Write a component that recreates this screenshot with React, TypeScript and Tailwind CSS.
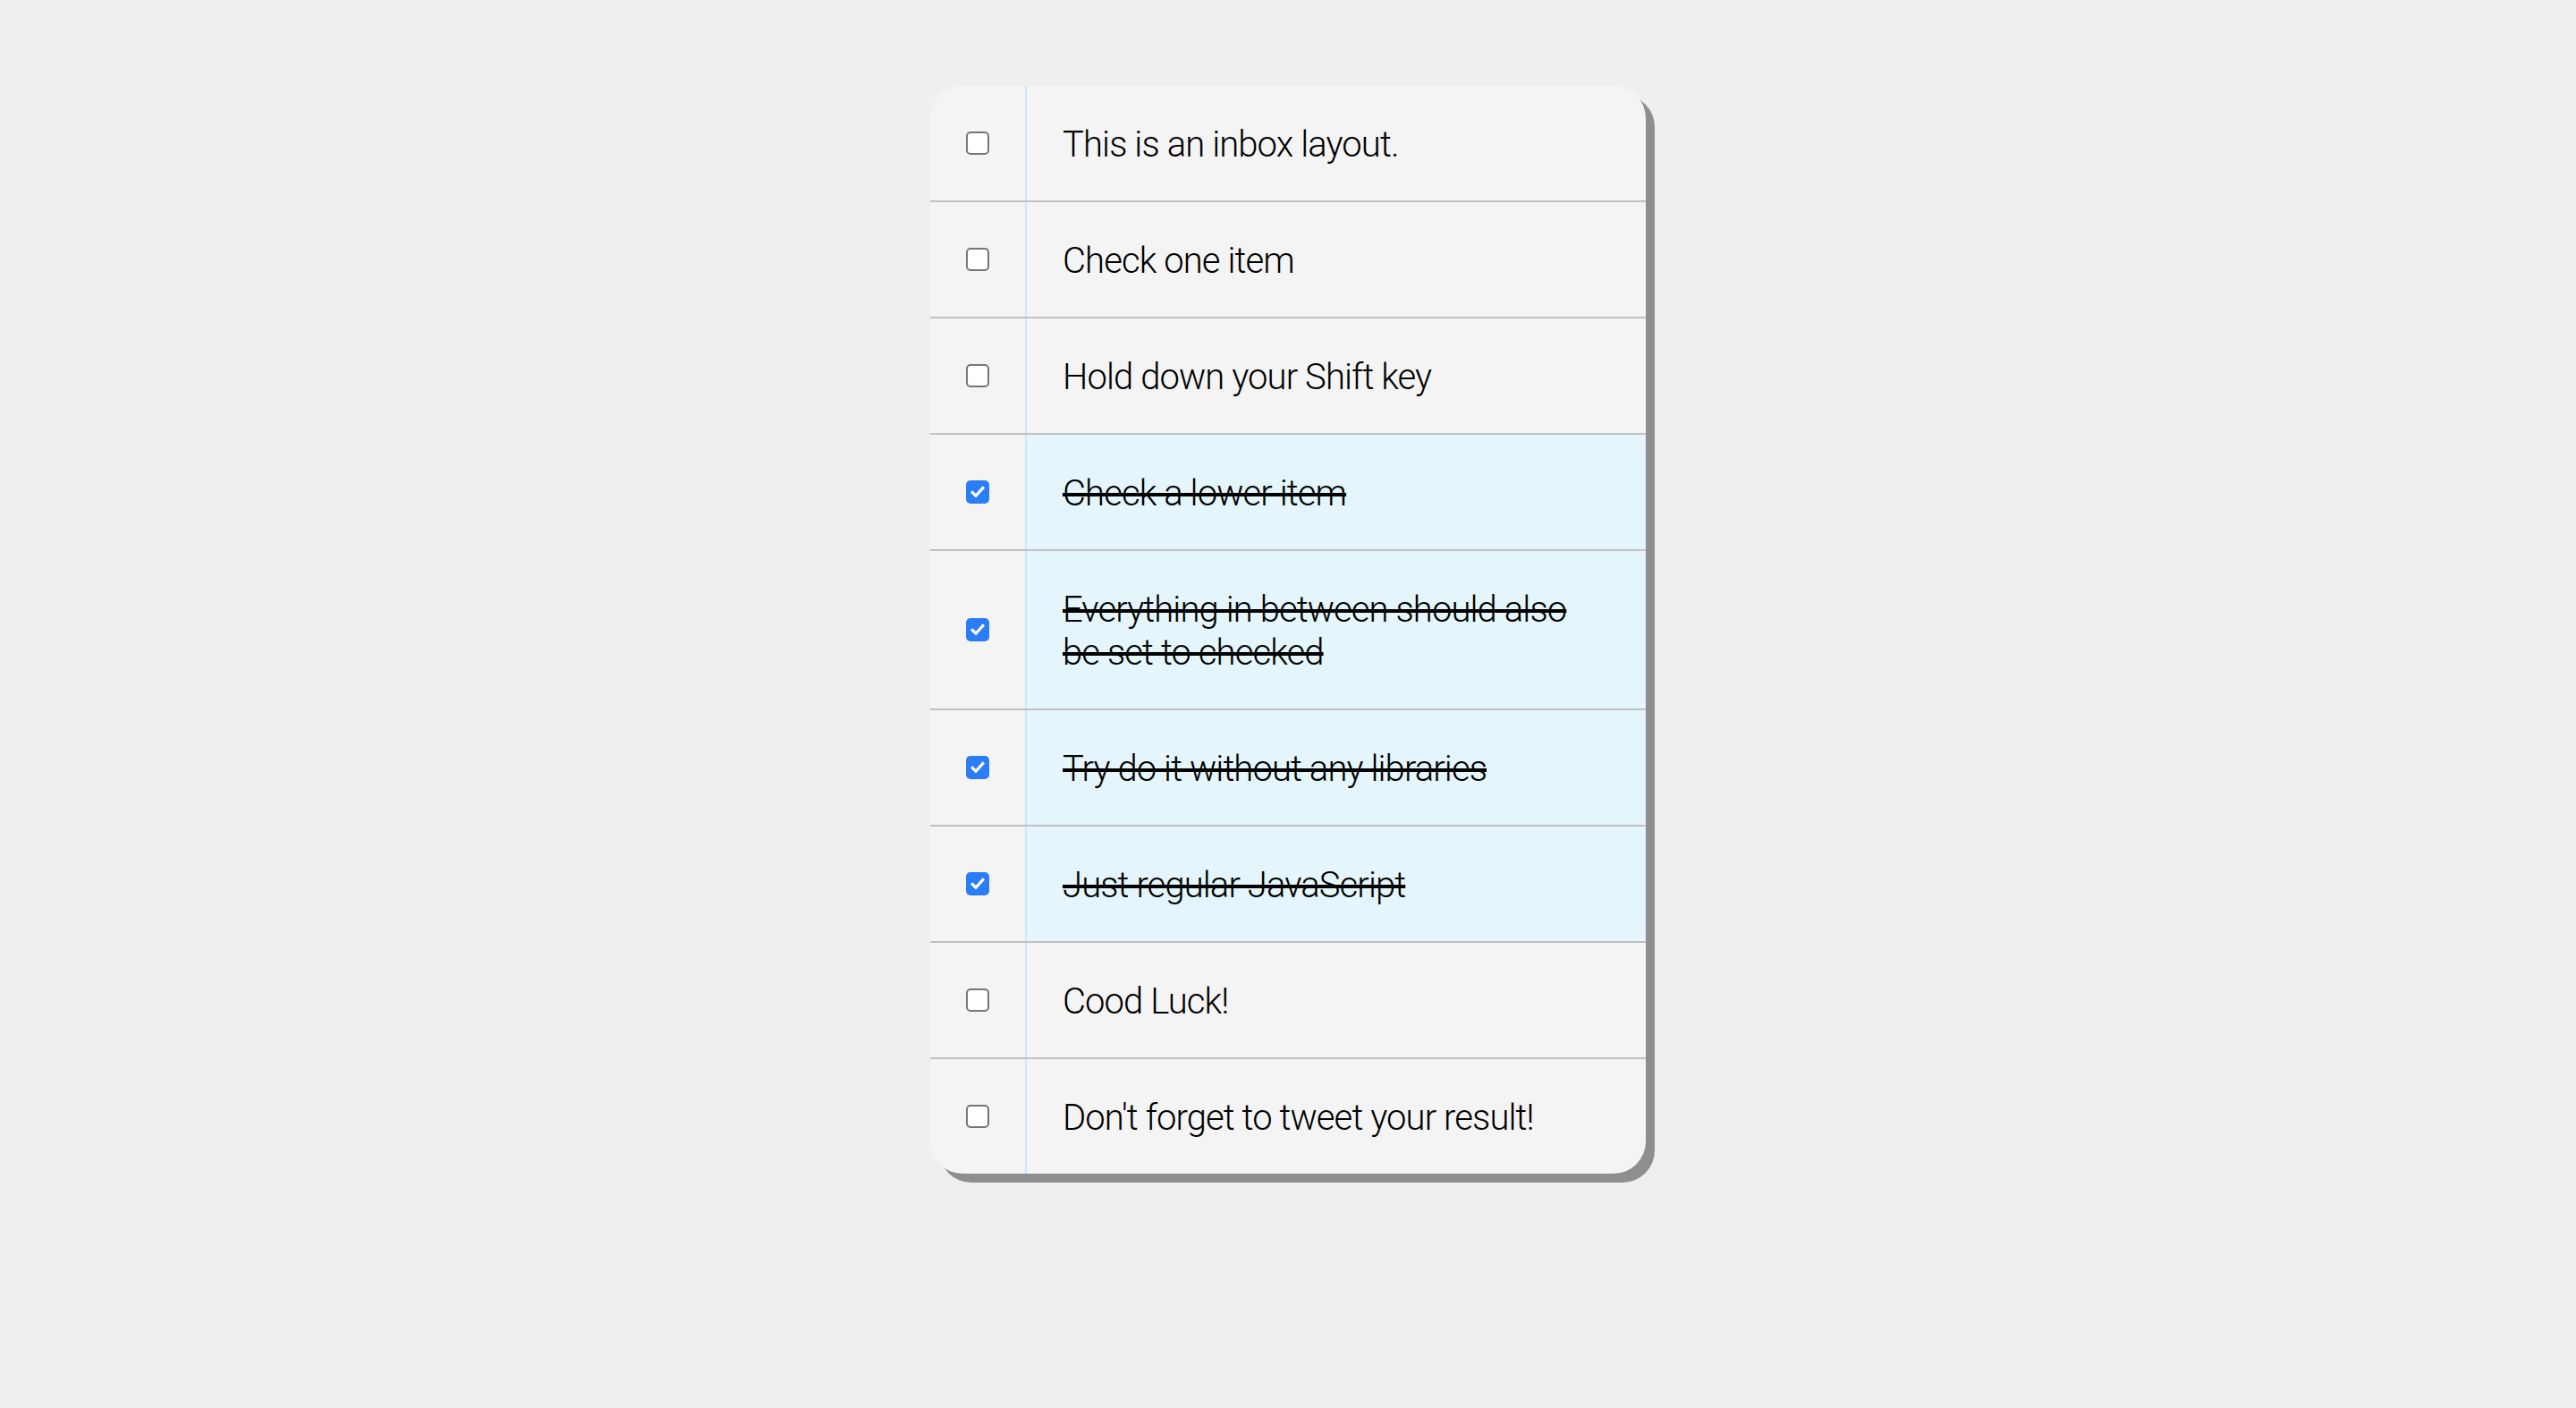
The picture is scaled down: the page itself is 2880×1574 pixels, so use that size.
import React from "react";

const items: { text: string; checked: boolean }[] = [
  { text: "This is an inbox layout.", checked: false },
  { text: "Check one item", checked: false },
  { text: "Hold down your Shift key", checked: false },
  { text: "Check a lower item", checked: true },
  { text: "Everything in between should also be set to checked", checked: true },
  { text: "Try do it without any libraries", checked: true },
  { text: "Just regular JavaScript", checked: true },
  { text: "Cood Luck!", checked: false },
  { text: "Don't forget to tweet your result!", checked: false },
];

function Box({ checked }: { checked: boolean }) {
  if (checked) {
    return (
      <div className="w-[26px] h-[26px] rounded-[5px] bg-[#2b7df7] flex items-center justify-center">
        <svg width="18" height="18" viewBox="0 0 18 18" fill="none">
          <path d="M3.2 9.4 L7 13.2 L14.8 4.6" stroke="white" strokeWidth="3.2" strokeLinecap="square" />
        </svg>
      </div>
    );
  }
  return <div className="w-[26px] h-[26px] rounded-[5px] border-2 border-[#767676] bg-white" />;
}

export default function App() {
  return (
    <div className="min-h-[1574px] bg-[#efefef] pt-[96px]" style={{ fontFamily: "Roboto, 'Liberation Sans', sans-serif" }}>
      <div className="mx-auto w-[800px] rounded-[36px] bg-[#f4f4f4] shadow-[10px_10px_0_#8e8e8e] overflow-hidden">
        {items.map((it, i) => (
          <div
            key={i}
            className={`flex items-stretch ${i < items.length - 1 ? "border-b-2 border-[#c0c0c0]" : ""}`}
          >
            <div className="w-[106px] shrink-0 flex items-center justify-center">
              <Box checked={it.checked} />
            </div>
            <p
              className={`flex-1 m-0 pl-[40px] pr-[60px] pt-[42px] pb-[38px] border-l-2 border-[#d1e2ff] text-[40px] leading-[48px] font-light tracking-[-0.9px] text-black ${
                it.checked ? "bg-[#e4f6fb] line-through decoration-[4px]" : ""
              }`}
            >
              {it.text}
            </p>
          </div>
        ))}
      </div>
    </div>
  );
}
